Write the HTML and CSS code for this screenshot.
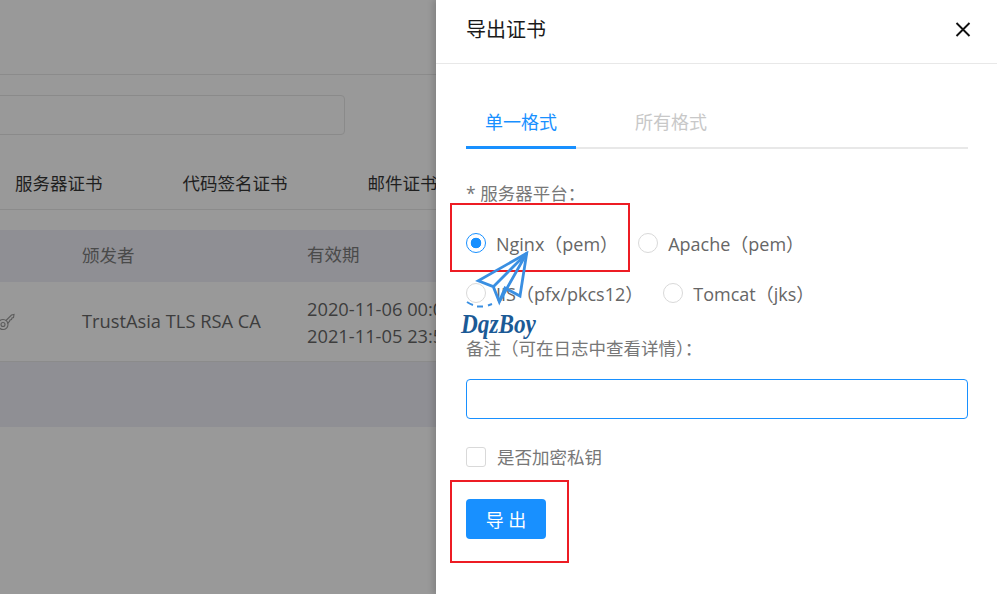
FILE: index.html
```html
<!DOCTYPE html>
<html lang="zh-CN">
<head>
    <meta charset="UTF-8">
    <meta name="viewport" content="width=device-width, initial-scale=1.0">
    <title>导出证书</title>
    <link rel="stylesheet" href="styles.css">
</head>
<body>
    <div class="screen">
        <!-- Page behind the drawer, dimmed -->
        <div class="backdrop">
            <div class="top-bar"></div>
            <div class="search-wrap"><div class="search-box"></div></div>
            <div class="cert-tabs">
                <span class="cert-tab">服务器证书</span>
                <span class="cert-tab">代码签名证书</span>
                <span class="cert-tab">邮件证书</span>
            </div>
            <div class="table-row table-head">
                <div class="col-icon"></div>
                <div class="col-issuer">颁发者</div>
                <div class="col-date">有效期</div>
            </div>
            <div class="table-row table-body">
                <div class="col-icon">
                    <svg class="key-icon" width="20" height="20" viewBox="0 0 20 20" fill="none" stroke="#5c5c5c" stroke-width="1.1">
                        <circle cx="6" cy="12.5" r="5"/>
                        <circle cx="6" cy="12.5" r="2"/>
                        <path d="M9 8.5 14.5 3l2.5-.5-.5 3-1.5.5-.5 1.5-1.5.5-.5 1.5-2 2"/>
                    </svg>
                </div>
                <div class="col-issuer">TrustAsia TLS RSA CA</div>
                <div class="col-date">2020-11-06 00:00:00<br>2021-11-05 23:59:59</div>
            </div>
            <div class="table-empty"></div>
        </div>

        <!-- Export drawer -->
        <div class="drawer">
            <div class="drawer-header">
                <span class="drawer-title">导出证书</span>
                <svg class="close-icon" width="18" height="18" viewBox="0 0 18 18" stroke="#111" stroke-width="1.9" fill="none">
                    <path d="M2.500 3l13 13M15.500 3l-13 13"/>
                </svg>
            </div>
            <div class="drawer-body">
                <div class="format-tabs">
                    <div class="format-tab active">单一格式</div>
                    <div class="format-tab disabled">所有格式</div>
                </div>
                <div class="field-label platform-label">* 服务器平台：</div>
                <div class="radio-row">
                    <label class="radio checked"><i class="radio-dot"></i>Nginx（pem）</label>
                    <label class="radio"><i class="radio-dot"></i>Apache（pem）</label>
                </div>
                <div class="radio-row">
                    <label class="radio"><i class="radio-dot"></i>IIS（pfx/pkcs12）</label>
                    <label class="radio"><i class="radio-dot"></i>Tomcat（jks）</label>
                </div>
                <div class="field-label note-label">备注（可在日志中查看详情）：</div>
                <input class="note-input" type="text">
                <label class="check"><i class="check-box"></i>是否加密私钥</label>
                <button class="export-btn">导 出</button>
            </div>
        </div>

        <!-- Annotations drawn on top of the screenshot -->
        <div class="mark mark-radio"></div>
        <div class="mark mark-btn"></div>
        <div class="watermark">
            <svg width="90" height="62" viewBox="0 0 90 62" fill="none" stroke="#3a8fe2" stroke-width="2.800">
                <path d="M66.700 2.300 18.300 29.700 33.300 35.700 39.300 50.700 45 37 60 45Z"/>
                <path d="M66.700 2.300 33.300 35.700M66.700 2.300 39.300 50.700"/>
                <path d="M7 51q3 2 6 3M17 55.500h6M28 54.500l4-1.500" stroke-width="2"/>
            </svg>
            <span class="watermark-text">DqzBoy</span>
        </div>
    </div>
</body>
</html>
```

FILE: styles.css
```css
* {
    box-sizing: border-box;
}

body {
    margin: 0;
    padding: 0;
    background: #fff;
    font-family: "Open Sans", "Noto Sans CJK SC", sans-serif;
    font-size: 17.5px;
    overflow: hidden;
}

.screen {
    position: relative;
    display: flex;
    width: 997px;
    height: 594px;
    overflow: hidden;
}

/* Dimmed page */
.backdrop {
    width: 436px;
    flex-shrink: 0;
    background: #999;
    overflow: hidden;
}

.top-bar {
    height: 75px;
    border-bottom: 1px solid #8b8b8b;
}

.search-wrap {
    height: 69px;
    padding-top: 20px;
}

.search-box {
    width: 355px;
    height: 40px;
    margin-left: -10px;
    border: 1px solid #8a8a8a;
    border-radius: 4px;
}

.cert-tabs {
    display: flex;
    height: 66px;
    padding: 14px 0 0 15px;
    border-bottom: 1px solid #8b8b8b;
    line-height: 50px;
    color: #1f1f1f;
    white-space: nowrap;
}

.cert-tab {
    margin-right: 80px;
}

.table-row {
    display: flex;
    align-items: center;
    white-space: nowrap;
}

.table-head {
    height: 52px;
    margin-top: 20px;
    padding-bottom: 3px;
    background: #8f8f94;
    color: #4a4a4a;
}

.table-body {
    height: 80px;
    border-bottom: 1px solid #8b8b8b;
    color: #3d3d3d;
    font-size: 18.3px;
}

.table-body .col-issuer {
    padding-bottom: 2px;
}

.col-icon {
    width: 82px;
    flex-shrink: 0;
}

.key-icon {
    display: block;
    margin-left: -3px;
}

.col-issuer {
    width: 225px;
    flex-shrink: 0;
}

.col-date {
    line-height: 27px;
}

.table-empty {
    height: 65px;
    background: #8f8f94;
}

/* Drawer */
.drawer {
    flex: 1;
    background: #fff;
    box-shadow: -3px 0 6px rgba(0, 0, 0, 0.15);
}

.drawer-header {
    display: flex;
    justify-content: space-between;
    align-items: center;
    height: 64px;
    padding: 0 25px 6px 30px;
    border-bottom: 1px solid #e8e8e8;
}

.drawer-title {
    font-size: 20px;
    color: #1a1a1a;
}

.drawer-body {
    padding: 36px 29px 0 30px;
}

.format-tabs {
    display: flex;
    height: 49px;
    border-bottom: 2px solid #e8e8e8;
}

.format-tab {
    height: 49px;
    padding: 0 19px;
    line-height: 44px;
    margin-right: 40px;
    font-size: 18px;
}

.format-tab.active {
    color: #1890ff;
    border-bottom: 3px solid #1890ff;
}

.format-tab.disabled {
    color: #c8c8c8;
}

.field-label {
    color: #777;
    line-height: 26px;
}

.platform-label {
    margin-top: 31px;
}

.radio-row {
    display: flex;
    gap: 20px;
    height: 50px;
    align-items: center;
    color: #666;
    font-size: 18px;
}

.platform-label + .radio-row {
    margin-top: 12px;
}

.radio {
    display: flex;
    align-items: center;
    white-space: nowrap;
}

.radio-dot {
    width: 20px;
    height: 20px;
    margin-right: 10px;
    border: 1px solid #d9d9d9;
    border-radius: 50%;
    background: #fff;
}

.radio.checked .radio-dot {
    border-color: #1890ff;
    background: radial-gradient(circle, #1890ff 0, #1890ff 5px, #fff 5.6px);
}

.note-label {
    margin-top: 17px;
}

.note-input {
    display: block;
    width: 100%;
    height: 40px;
    margin-top: 18px;
    border: 1px solid #1890ff;
    border-radius: 4px;
    outline: none;
}

.check {
    display: flex;
    align-items: center;
    height: 26px;
    margin-top: 24px;
    color: #777;
}

.check-box {
    width: 20px;
    height: 20px;
    margin-right: 11px;
    margin-top: 2px;
    border: 1px solid #d9d9d9;
    border-radius: 3px;
}

.export-btn {
    display: block;
    width: 80px;
    height: 40px;
    margin-top: 30px;
    padding: 0;
    border: none;
    border-radius: 4px;
    background: #1890ff;
    color: #fff;
    font-family: inherit;
    font-size: 18px;
}

/* Red annotation boxes */
.mark {
    position: absolute;
    border: 2px solid #ed1c24;
}

.mark-radio {
    left: 450px;
    top: 203px;
    width: 180px;
    height: 69px;
}

.mark-btn {
    left: 450px;
    top: 480px;
    width: 119px;
    height: 83px;
}

/* Logo stamped over the form */
.watermark {
    position: absolute;
    left: 460px;
    top: 251px;
    width: 90px;
    height: 92px;
}

.watermark svg {
    display: block;
}

.watermark-text {
    position: absolute;
    left: 1px;
    top: 58px;
    font-family: "Liberation Serif", serif;
    font-style: italic;
    font-weight: bold;
    font-size: 27px;
    line-height: 30px;
    color: #1b5a96;
    transform: scaleX(0.86);
    transform-origin: left center;
}
```
